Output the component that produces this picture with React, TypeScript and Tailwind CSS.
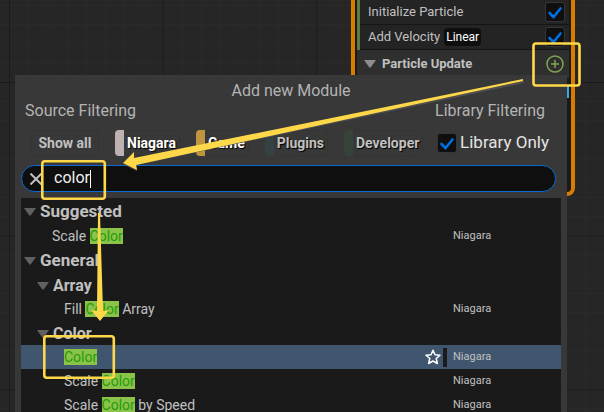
import { useState, type ReactNode } from "react";

function CanvasGrid() {
  return (
    <svg className="absolute inset-0 h-full w-full" aria-hidden="true">
      <defs>
        <pattern id="minor" x="9" y="5" width="19.2" height="19.2" patternUnits="userSpaceOnUse">
          <path d="M0.5 0V19.2M0 0.5H19.2" stroke="#2a2a2a" fill="none" />
        </pattern>
        <pattern id="major" x="9" y="82" width="153.6" height="153.6" patternUnits="userSpaceOnUse">
          <path d="M0.5 0V153.6M0 0.5H153.6" stroke="#1b1b1b" fill="none" />
        </pattern>
      </defs>
      <rect width="100%" height="100%" fill="url(#minor)" />
      <rect width="100%" height="100%" fill="url(#major)" />
    </svg>
  );
}

function Tick({ label }: { label: string }) {
  return (
    <span className="relative block h-5 w-5 shrink-0">
      <input
        type="checkbox"
        defaultChecked
        aria-label={label}
        className="peer block h-5 w-5 appearance-none rounded-[3px] border border-[#363636] bg-[#0f0f0f]"
      />
      <svg viewBox="0 0 20 20" className="pointer-events-none absolute inset-0 hidden peer-checked:block" aria-hidden="true">
        <path d="M4.5 11L8.5 15L15.5 6.5" fill="none" stroke="#0070e0" strokeWidth="2.6" strokeLinecap="round" />
      </svg>
    </span>
  );
}

function Caret({ className }: { className: string }) {
  return (
    <svg viewBox="0 0 12 8" className={`h-2 w-3 shrink-0 ${className}`} aria-hidden="true">
      <path d="M0 0H12L6.8 7.3Q6 8.2 5.2 7.3Z" fill="currentColor" />
    </svg>
  );
}

function NodePanel() {
  return (
    <section className="absolute top-0 right-[29px] w-[224px] rounded-b-lg border-x-4 border-b-4 border-[#d87c00] bg-[#1a1a1a] px-0.5 pb-[84px] text-[13px] text-[#c0c0c0]">
      <div className="border-l-[3px] border-[#5c7a43]">
        <div className="flex h-[25px] items-center justify-between border-b border-[#151515] bg-[#242424] pr-1 pl-2">
          <span>Initialize Particle</span>
          <Tick label="Initialize Particle" />
        </div>
        <div className="flex h-[25px] items-center justify-between border-b border-[#151515] bg-[#242424] pr-1 pl-2">
          <span className="flex items-center gap-1">
            Add Velocity
            <span className="rounded bg-[#0f0f0f] px-0.5 text-xs leading-[18px] text-white">Linear</span>
          </span>
          <Tick label="Add Velocity" />
        </div>
      </div>
      <div className="flex h-7 items-center justify-between bg-[#2f2f2f] pr-[5px] pl-[7px]">
        <span className="flex items-center gap-[6px] font-bold">
          <Caret className="text-[#8c8c8c]" />
          Particle Update
        </span>
        <button aria-label="Add module">
          <svg viewBox="0 0 18 18" className="block h-[18px] w-[18px]" fill="none" stroke="#7fa650" strokeWidth="1.5" aria-hidden="true">
            <circle cx="9" cy="9" r="8" />
            <path d="M9 5V13M5 9H13" />
          </svg>
        </button>
      </div>
      <div className="ml-auto h-[30px] w-1 bg-[#1a1a1a] pt-2">
        <div className="h-3 bg-[#3aa5e8]" />
      </div>
    </section>
  );
}

function Chip({ children, color, active }: { children: string; color: string; active?: boolean }) {
  return (
    <button
      className={`flex h-[26px] items-center gap-[3px] rounded pr-1 text-sm font-bold ring-1 ring-[#343434] ring-inset [text-shadow:1px_1px_1px_#000] ${active ? "text-white" : "text-[#c0c0c0]"}`}
    >
      <span className={`h-full w-[9px] rounded-l ${color}`} />
      {children}
    </button>
  );
}

function Mark() {
  return <mark className="inline-block h-4 bg-[#8bc34a] leading-4 text-[#259b0b]">Color</mark>;
}

function Group({ children, sub }: { children: string; sub?: boolean }) {
  return (
    <li className={`flex items-center gap-1 font-bold text-[#c0c0c0] ${sub ? "h-6 pt-0.5 pl-4 text-base" : "h-[25px] pl-[3px] text-[17px]"}`}>
      <Caret className="text-[#606060]" />
      {children}
    </li>
  );
}

function Item({ children, shallow, selected }: { children: ReactNode; shallow?: boolean; selected?: boolean }) {
  return (
    <li className={`flex h-6 items-center text-sm text-[#c0c0c0] ${shallow ? "pl-[31px]" : "pl-[43px]"} ${selected ? "bg-[#40566f]" : ""}`}>
      <span className="flex-1 whitespace-pre">{children}</span>
      {selected && (
        <>
          <button aria-label="Favorite">
            <svg viewBox="0 0 16 16" className="block h-4 w-4" fill="none" stroke="#fff" strokeWidth="1.5" strokeLinejoin="round" aria-hidden="true">
              <path d="M8 1.3L10 5.8L15 6.2L11.2 9.5L12.4 14.5L8 12L3.6 14.5L4.8 9.5L1 6.2L6 5.8Z" />
            </svg>
          </button>
          <span className="mr-1.5 ml-0.5 h-[19px] w-1 bg-[#1a1a1a]" />
        </>
      )}
      <span className="w-[108px] text-[11px]">Niagara</span>
    </li>
  );
}

function ModuleMenu() {
  const [query, setQuery] = useState("color");
  return (
    <section className="absolute top-[75px] right-[37px] bottom-0 left-[15px] flex flex-col overflow-hidden bg-[#383838] px-1.5 pt-1.5 text-base text-[#b4b4b4]">
      <h1 className="text-center leading-5">Add new Module</h1>
      <div className="flex justify-between pr-4 pl-1 leading-5">
        <span>Source Filtering</span>
        <span>Library Filtering</span>
      </div>
      <div className="mt-[9px] flex h-[26px] items-center pl-2.5">
        <div className="flex gap-4">
          <button className="h-[26px] w-[68px] rounded text-sm font-bold text-[#c0c0c0] ring-1 ring-[#343434] ring-inset">Show all</button>
          <Chip color="bg-[#bdb1b1]" active>Niagara</Chip>
          <Chip color="bg-[#bf953f]" active>Game</Chip>
          <Chip color="bg-[#354244]">Plugins</Chip>
          <Chip color="bg-[#374339]">Developer</Chip>
        </div>
        <label className="ml-auto flex items-center gap-[3px] pr-3 text-[17px] whitespace-nowrap text-[#e4e4e4]">
          <Tick label="Library Only" />
          Library Only
        </label>
      </div>
      <div className="mt-[9px] mr-[5px] flex h-[27px] shrink-0 items-center rounded-full border border-[#0a6ad6] bg-[#0f0f0f] pl-2">
        <button aria-label="Clear search">
          <svg viewBox="0 0 12 12" className="block h-3 w-3" stroke="#c0c0c0" strokeWidth="2" aria-hidden="true">
            <path d="M0.5 0.5L11.5 11.5M11.5 0.5L0.5 11.5" />
          </svg>
        </button>
        <input
          aria-label="Search modules"
          value={query}
          onChange={(e) => setQuery(e.target.value)}
          className="ml-3 field-sizing-content bg-transparent pb-0.5 text-base leading-5 text-[#f0f0f0] outline-none"
        />
        <span className="h-[18px] w-px bg-white" />
      </div>
      <ul className="mt-1.5 min-h-0 flex-1 overflow-hidden bg-[#1a1a1a] pt-px">
        <Group>Suggested</Group>
        <Item shallow>Scale <Mark /></Item>
        <Group>General</Group>
        <Group sub>Array</Group>
        <Item>Fill <Mark /> Array</Item>
        <Group sub>Color</Group>
        <Item selected><Mark /></Item>
        <Item>Scale <Mark /></Item>
        <Item>Scale <Mark /> by Speed</Item>
      </ul>
    </section>
  );
}

function Annotations() {
  return (
    <svg className="pointer-events-none absolute top-0 left-0 h-[412px] w-[604px]" viewBox="0 0 604 412" aria-hidden="true">
      <g fill="#555" opacity="0.8" transform="translate(1 2)">
        <path d="M523 79L134 156L133 153L123 163L136 169L136 163L523 81Z" />
      </g>
      <g fill="#ffd84a">
        <path d="M523 79L134 158L134 152L123 163L137 170L136 165L523 81Z" />
        <path d="M98 213H100L103 311L109 310L100 321L91 310L97 311Z" />
      </g>
      <g fill="none" stroke="#ffd84a" strokeWidth="2.6">
        <rect x="533.5" y="43.5" width="46" height="42" rx="2.5" />
        <rect x="42.3" y="161.3" width="62.5" height="37.5" rx="2.5" />
        <rect x="44.3" y="336.3" width="69.5" height="41.5" rx="2.5" />
      </g>
    </svg>
  );
}

export default function App() {
  return (
    <main className="relative h-screen overflow-hidden bg-[#262626] font-[Roboto,sans-serif]">
      <CanvasGrid />
      <NodePanel />
      <ModuleMenu />
      <Annotations />
    </main>
  );
}
